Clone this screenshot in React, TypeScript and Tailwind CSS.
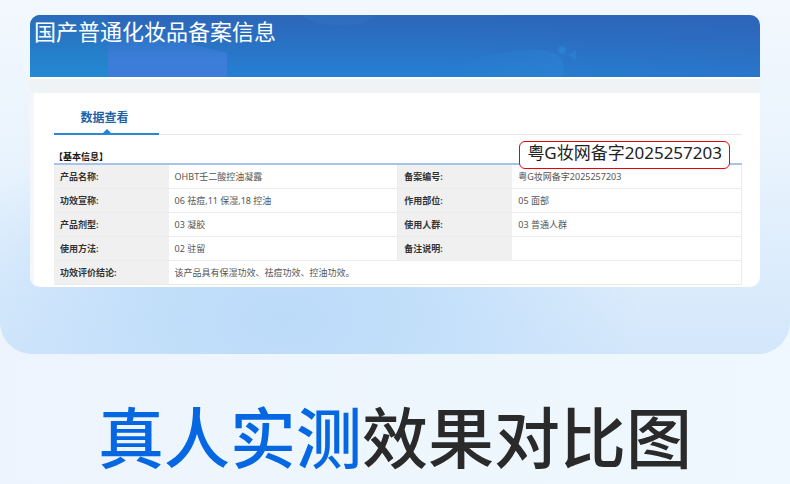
import { clsx } from 'clsx';

interface Field {
  label: string;
  value: string;
}

const ROWS: [Field, Field][] = [
  [
    { label: '产品名称:', value: 'OHBT壬二酸控油凝露' },
    { label: '备案编号:', value: '粤G妆网备字2025257203' },
  ],
  [
    { label: '功效宣称:', value: '06 祛痘,11 保湿,18 控油' },
    { label: '作用部位:', value: '05 面部' },
  ],
  [
    { label: '产品剂型:', value: '03 凝胶' },
    { label: '使用人群:', value: '03 普通人群' },
  ],
  [
    { label: '使用方法:', value: '02 驻留' },
    { label: '备注说明:', value: '' },
  ],
];

function Label({ children, first }: { children: React.ReactNode; first?: boolean }) {
  return (
    <th
      scope="row"
      className={clsx(
        'bg-[#f0f0f0] pt-0.5 pl-1.5 text-left font-semibold text-[#333]',
        !first && 'border-l border-[#ececec]',
      )}
    >
      {children}
    </th>
  );
}

function Value({ children, colSpan }: { children: React.ReactNode; colSpan?: number }) {
  return (
    <td colSpan={colSpan} className="pt-0.5 pl-1.5 text-[#555]">
      {children}
    </td>
  );
}

function Banner() {
  return (
    <header className="relative h-[62px] overflow-hidden bg-linear-to-b from-[#2c66b8] to-[#2580d3]">
      <svg
        className="absolute inset-0 h-full w-full"
        viewBox="0 0 730 62"
        preserveAspectRatio="none"
        aria-hidden="true"
      >
        <defs>
          <linearGradient id="left" x1="0" x2="0" y1="0" y2="1">
            <stop offset="0" stopColor="#2a6cbb" />
            <stop offset="1" stopColor="#238ad2" />
          </linearGradient>
          <linearGradient id="block" x1="0" x2="0" y1="0" y2="1">
            <stop offset="0" stopColor="#3b7dd8" stopOpacity="0" />
            <stop offset="0.6" stopColor="#3b7dd8" />
          </linearGradient>
          <linearGradient id="right" x1="0" x2="1" y1="0" y2="0">
            <stop offset="0" stopColor="#3060b8" stopOpacity="0" />
            <stop offset="1" stopColor="#3060b8" stopOpacity="0.3" />
          </linearGradient>
          <linearGradient id="hill" x1="0" x2="1" y1="0" y2="0">
            <stop offset="0" stopColor="#2d84d4" stopOpacity="0" />
            <stop offset="1" stopColor="#2d84d4" stopOpacity="0.5" />
          </linearGradient>
          <radialGradient id="dot">
            <stop offset="0" stopColor="#2b86da" />
            <stop offset="1" stopColor="#2b86da" stopOpacity="0" />
          </radialGradient>
        </defs>
        <rect width="78" height="62" fill="url(#left)" />
        <path d="M78 16 L140 24 L197 38 V62 H78 Z" fill="url(#block)" />
        <path d="M270 0 H345 C335 14 290 14 270 0 Z" fill="#2f74c2" opacity="0.5" />
        <rect x="400" width="330" height="62" fill="url(#right)" />
        <path d="M410 62 C440 40 480 35 510 35 C528 36 538 46 532 62 Z" fill="url(#hill)" />
        <circle cx="532" cy="35" r="6" fill="url(#dot)" />
        <path d="M538 40 L546 35 V45 Z" fill="#2c84d9" opacity="0.6" />
      </svg>
      <h1 className="relative px-1 text-[22px] leading-8 text-white">国产普通化妆品备案信息</h1>
    </header>
  );
}

function Records() {
  return (
    <section className="relative">
      <h2 className="pt-4 text-[9px] leading-3 font-semibold text-[#111]">【基本信息】</h2>
      <table className="w-full table-fixed border-collapse border-t-2 border-r border-b border-t-[#a6c3ee] border-r-[#ececec] border-b-[#f2e8e2] text-[9px] leading-3">
        <colgroup>
          <col className="w-1/6" />
          <col className="w-1/3" />
          <col className="w-1/6" />
          <col className="w-1/3" />
        </colgroup>
        <tbody>
          {ROWS.map(([a, b]) => (
            <tr key={a.label} className="h-6 border-b border-[#ececec]">
              <Label first>{a.label}</Label>
              <Value>{a.value}</Value>
              <Label>{b.label}</Label>
              <Value>{b.value}</Value>
            </tr>
          ))}
          <tr className="h-6">
            <Label first>功效评价结论:</Label>
            <Value colSpan={3}>该产品具有保湿功效、祛痘功效、控油功效。</Value>
          </tr>
        </tbody>
      </table>
      <p className="absolute top-1.5 right-3 rounded-md border border-[#e8000c] bg-white px-[7px] pb-1 text-[17px] leading-[22px] text-[#222]">
        粤G妆网备字2025257203
      </p>
    </section>
  );
}

export default function App() {
  return (
    <main className="min-h-screen bg-linear-to-r from-[#edf4fd] to-[#eff8fe] font-['Noto_Sans','Noto_Sans_CJK_SC',sans-serif]">
      <div className="rounded-b-[32px] bg-[radial-gradient(ellipse_45%_60%_at_36%_90%,#bbdbf9_0%,#c3dffa_40%,transparent_100%),linear-gradient(to_bottom,#f3f8fe_0%,#eaf4fd_40%,#d3e7fb_100%)] px-[30px] pt-[15px] pb-[67px]">
        <article className="overflow-hidden rounded-[10px] bg-white">
          <Banner />
          <div className="mt-0.5 h-3.5 bg-[#eff3f6]" />
          <div className="border-l-4 border-[#f3f6fa] pt-4 pr-[18px] pb-0.5 pl-5">
            <nav className="flex border-b border-[#e4e6e8]">
              <a
                href="#data"
                className="relative -mb-px w-[105px] border-b-2 border-[#2e86d6] pt-px pr-1 pb-[7px] text-center text-[12px] leading-4 font-bold text-[#1d62a6]"
              >
                数据查看
                <svg className="absolute bottom-0 left-1/2 h-1 w-2 -translate-x-1/2" viewBox="0 0 8 4" aria-hidden="true">
                  <path d="M0 4 L4 0 L8 4 Z" fill="#2580cf" />
                </svg>
              </a>
            </nav>
            <Records />
          </div>
        </article>
      </div>
      <h2 className="px-4 pt-10 pb-2 text-center font-['Noto_Sans_CJK_SC',sans-serif] text-[66px] leading-[80px] font-medium text-[#2a2a2a]">
        <span className="text-[#0568e2]">真人实测</span>效果对比图
      </h2>
    </main>
  );
}
